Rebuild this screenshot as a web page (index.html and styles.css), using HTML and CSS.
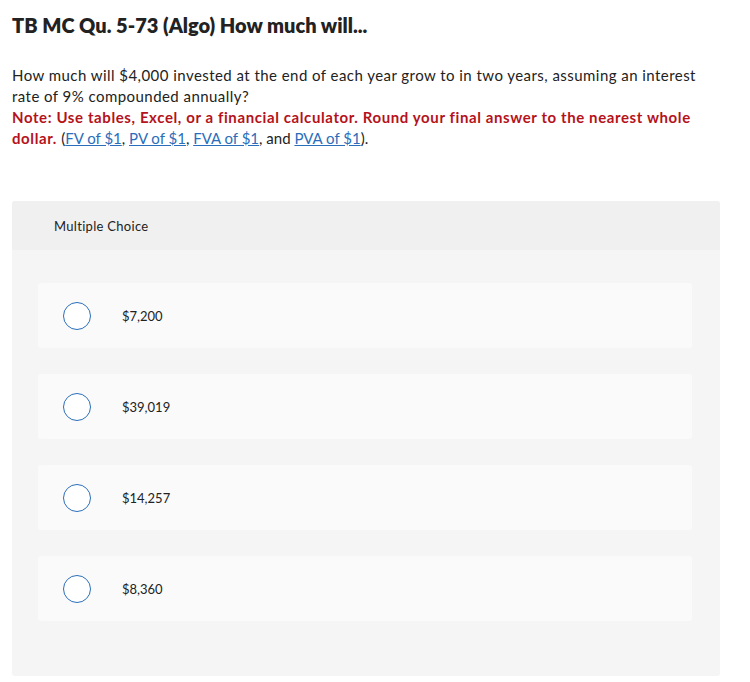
FILE: index.html
```html
<!DOCTYPE html>
<html lang="en">
<head>
    <meta charset="UTF-8">
    <meta name="viewport" content="width=device-width, initial-scale=1.0">
    <title>TB MC Qu. 5-73 (Algo)</title>
    <link rel="stylesheet" href="styles.css">
</head>
<body>

    <h1 class="title">TB MC Qu. 5-73 (Algo) How much will...</h1>

    <div class="question">
        <p>How much will $4,000 invested at the end of each year grow to in two years, assuming an interest rate of 9% compounded annually?</p>
        <p><span class="note">Note: Use tables, Excel, or a financial calculator. Round your final answer to the nearest whole dollar.</span> <span class="refs">(<a href="#">FV of $1</a>, <a href="#">PV of $1</a>, <a href="#">FVA of $1</a>, and <a href="#">PVA of $1</a>).</span></p>
    </div>

    <div class="panel">
        <div class="panel-head">Multiple Choice</div>
        <div class="choices">
            <label class="choice"><span class="radio"></span>$7,200</label>
            <label class="choice"><span class="radio"></span>$39,019</label>
            <label class="choice"><span class="radio"></span>$14,257</label>
            <label class="choice"><span class="radio"></span>$8,360</label>
        </div>
    </div>

</body>
</html>
```

FILE: styles.css
```css
body {
    margin: 0;
    padding: 0 30px 0 12px;
    font-family: 'Lato', 'Open Sans', sans-serif;
    color: #222;
    background-color: #fff;
}

.title {
    margin: 0;
    padding-top: 13px;
    font-size: 20px;
    line-height: 24px;
    font-weight: 800;
    color: #222;
}

.question {
    margin-top: 28px;
    font-size: 15px;
    letter-spacing: 0.45px;
    line-height: 21px;
}

.question p {
    margin: 0;
}

.note {
    color: #b5121b;
    font-weight: 700;
    letter-spacing: 0.6px;
}

.refs {
    letter-spacing: 0;
}

.question a {
    color: #2a6ebb;
    text-decoration: underline;
}

.panel {
    margin-top: 52px;
    background-color: #f5f5f5;
    border-radius: 3px;
    padding-bottom: 55px;
}

.panel-head {
    height: 49px;
    display: flex;
    align-items: center;
    padding-left: 42px;
    background-color: #f0f0f0;
    border-radius: 3px 3px 0 0;
    font-size: 13px;
    letter-spacing: 0.3px;
    color: #222;
}

.choices {
    display: flex;
    flex-direction: column;
    gap: 26px;
    padding: 33px 28px 0 26px;
}

.choice {
    height: 65px;
    display: flex;
    align-items: center;
    padding-left: 25px;
    background-color: #fafafa;
    border-radius: 3px;
    font-size: 13px;
    cursor: pointer;
}

.radio {
    width: 26px;
    height: 26px;
    border: 1px solid #2a6ebb;
    border-radius: 50%;
    background-color: #fff;
    margin-right: 31px;
}
```
